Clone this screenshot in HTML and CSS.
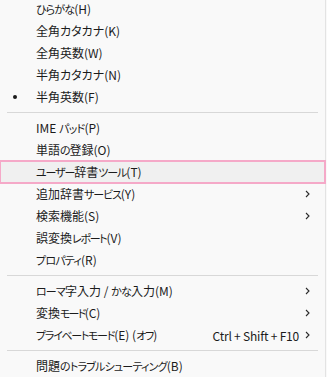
FILE: index.html
```html
<!DOCTYPE html>
<html lang="ja">
<head>
<meta charset="utf-8">
<link rel="stylesheet" href="styles.css">
</head>
<body>
<div class="menu">
  <div class="item"><span class="check"></span><span class="label"><span class="kn k1">ひらがな</span>(H)</span></div>
  <div class="item"><span class="check"></span><span class="label">全角カタカナ(K)</span></div>
  <div class="item"><span class="check"></span><span class="label">全角英数(W)</span></div>
  <div class="item"><span class="check"></span><span class="label">半角カタカナ(N)</span></div>
  <div class="item"><span class="check"><span class="dot"></span></span><span class="label">半角英数(F)</span></div>
  <div class="sep"></div>
  <div class="item"><span class="check"></span><span class="label">IME <span class="kn k1">パッド</span>(P)</span></div>
  <div class="item"><span class="check"></span><span class="label">単語<span class="kn k15">の</span>登録(O)</span></div>
  <div class="item focus"><span class="check"></span><span class="label"><span class="kn k15">ユーザー</span>辞書<span class="kn k15">ツール</span>(T)</span></div>
  <div class="item"><span class="check"></span><span class="label">追加辞書<span class="kn k15">サービス</span>(Y)</span><span class="arrow"><svg width="5" height="8" viewBox="0 0 5 8"><path d="M1 1 L4 4 L1 7" fill="none" stroke="#2b2b2b" stroke-width="1.1"/></svg></span></div>
  <div class="item"><span class="check"></span><span class="label">検索機能(S)</span><span class="arrow"><svg width="5" height="8" viewBox="0 0 5 8"><path d="M1 1 L4 4 L1 7" fill="none" stroke="#2b2b2b" stroke-width="1.1"/></svg></span></div>
  <div class="item"><span class="check"></span><span class="label">誤変換<span class="kn k2">レポート</span>(V)</span></div>
  <div class="item"><span class="check"></span><span class="label"><span class="kn k1">プロパティ</span>(R)</span></div>
  <div class="sep"></div>
  <div class="item"><span class="check"></span><span class="label"><span class="kn k1">ローマ</span>字入力 / <span class="kn k1">かな</span>入力(M)</span><span class="arrow"><svg width="5" height="8" viewBox="0 0 5 8"><path d="M1 1 L4 4 L1 7" fill="none" stroke="#2b2b2b" stroke-width="1.1"/></svg></span></div>
  <div class="item"><span class="check"></span><span class="label">変換<span class="kn k25">モード</span>(C)</span><span class="arrow"><svg width="5" height="8" viewBox="0 0 5 8"><path d="M1 1 L4 4 L1 7" fill="none" stroke="#2b2b2b" stroke-width="1.1"/></svg></span></div>
  <div class="item"><span class="check"></span><span class="label"><span class="kn k2">プライベートモード</span>(E) (<span class="kn k15">オフ</span>)</span><span class="shortcut">Ctrl + Shift + F10</span><span class="arrow"><svg width="5" height="8" viewBox="0 0 5 8"><path d="M1 1 L4 4 L1 7" fill="none" stroke="#2b2b2b" stroke-width="1.1"/></svg></span></div>
  <div class="sep"></div>
  <div class="item"><span class="check"></span><span class="label">問題<span class="kn k1">のトラブルシューティング</span>(B)</span></div>
</div>
</body>
</html>
```
FILE: styles.css
```css
html, body {
  margin: 0;
  padding: 0;
  background: #f9f9f9;
  overflow: hidden;
}
.menu {
  width: 325px;
  height: 390px;
  margin-top: -2px;
  border-right: 1px solid #e3e3e3;
  font-family: "Noto Sans CJK JP", "Noto Sans", sans-serif;
  font-size: 12px;
  font-feature-settings: "palt";
  color: #1b1b1b;
}
.item {
  display: flex;
  align-items: center;
  height: 22px;
  padding-right: 15px;
  box-sizing: border-box;
  position: relative;
}
.check {
  width: 36px;
  flex: none;
  display: flex;
  align-items: center;
}
.dot {
  display: block;
  width: 4px;
  height: 4px;
  border-radius: 50%;
  background: #1b1b1b;
  margin-left: 13px;
}
.label {
  flex: 1;
  white-space: nowrap;
  line-height: 22px;
}
.kn { font-size: 11px; }
.k1 { letter-spacing: -0.8px; }
.k15 { letter-spacing: -1.1px; }
.k2 { letter-spacing: -1.3px; }
.k25 { letter-spacing: -1.8px; }
.shortcut {
  margin-right: 6px;
  white-space: nowrap;
  letter-spacing: -0.2px;
}
.arrow {
  display: flex;
  align-items: center;
  width: 5px;
}
.focus {
  background: #f0f0f0;
  outline: 2px solid #f5a9c8;
  outline-offset: -1px;
}
.sep {
  height: 1px;
  margin: 4px 7px 4px 7px;
  background: #d8d8d8;
}
```
